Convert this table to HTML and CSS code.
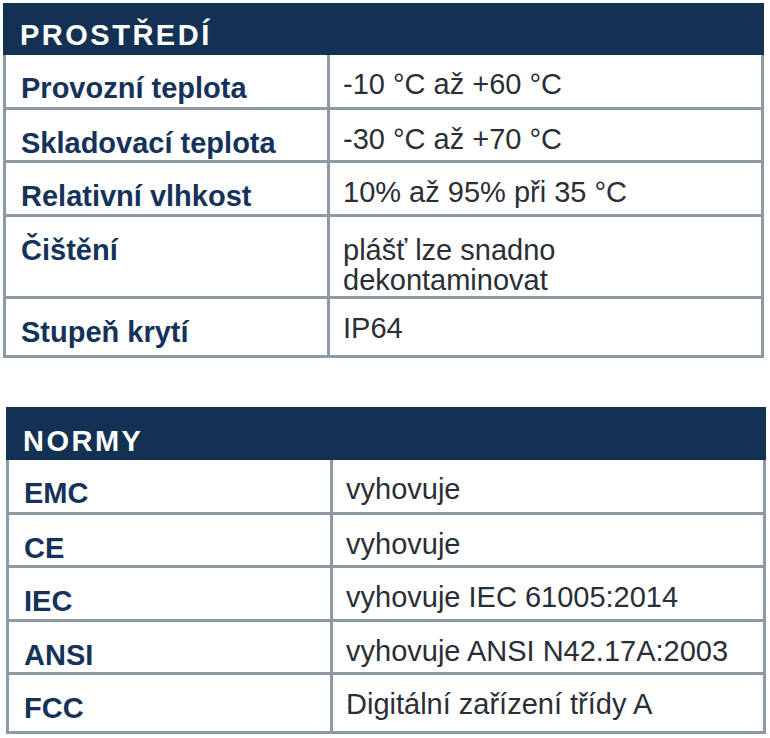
FILE: index.html
```html
<!DOCTYPE html>
<html lang="cs">
<head>
<meta charset="utf-8">
<title>Specifikace</title>
<link rel="stylesheet" href="styles.css">
</head>
<body>
<section class="spec spec--env">
  <h2 class="spec-title">PROSTŘEDÍ</h2>
  <div class="spec-body">
    <div class="spec-row r52"><div class="spec-label">Provozní teplota</div><div class="spec-value">-10 °C až +60 °C</div></div>
    <div class="spec-row r50"><div class="spec-label">Skladovací teplota</div><div class="spec-value">-30 °C až +70 °C</div></div>
    <div class="spec-row r51"><div class="spec-label">Relativní vlhkost</div><div class="spec-value">10% až 95% při 35 °C</div></div>
    <div class="spec-row r79"><div class="spec-label">Čištění</div><div class="spec-value spec-value--low">plášť lze snadno<br>dekontaminovat</div></div>
    <div class="spec-row r56"><div class="spec-label">Stupeň krytí</div><div class="spec-value">IP64</div></div>
  </div>
</section>

<section class="spec spec--norms">
  <h2 class="spec-title spec-title--tall">NORMY</h2>
  <div class="spec-body">
    <div class="spec-row r52"><div class="spec-label">EMC</div><div class="spec-value">vyhovuje</div></div>
    <div class="spec-row r50"><div class="spec-label">CE</div><div class="spec-value">vyhovuje</div></div>
    <div class="spec-row r51"><div class="spec-label">IEC</div><div class="spec-value">vyhovuje IEC 61005:2014</div></div>
    <div class="spec-row r50"><div class="spec-label">ANSI</div><div class="spec-value">vyhovuje ANSI N42.17A:2003</div></div>
    <div class="spec-row r56"><div class="spec-label">FCC</div><div class="spec-value">Digitální zařízení třídy A</div></div>
  </div>
</section>
</body>
</html>
```

FILE: styles.css
```css
* { box-sizing: border-box; }

html, body {
  margin: 0;
  padding: 0;
  background: #ffffff;
}

body {
  font-family: "Liberation Sans", Arial, sans-serif;
  font-size: 29px;
  line-height: 30px;
}

.spec {
  width: 761px;
}

.spec--env {
  margin: 3px 0 0 3px;
}

.spec--norms {
  margin: 49px 0 0 6px;
  width: 760px;
}

.spec-title {
  margin: 0;
  height: 52px;
  padding: 17px 0 0 17px;
  background: #133253;
  color: #ffffff;
  font-size: 29px;
  font-weight: bold;
  line-height: 30px;
  letter-spacing: 2.5px;
}

.spec-title--tall {
  height: 53px;
  padding-top: 19px;
}

.spec-body {
  border: 3px solid #8d9aa6;
  border-top: 0;
}

.spec-row {
  display: grid;
  grid-template-columns: 324px 1fr;
  box-sizing: content-box;
}

.spec-row + .spec-row {
  border-top: 3px solid #8d9aa6;
}

.r50 { height: 50px; }
.r51 { height: 51px; }
.r52 { height: 52px; }
.r56 { height: 56px; }
.r79 { height: 79px; }

.spec-label {
  padding: 18px 0 0 15px;
  border-right: 3px solid #8d9aa6;
  color: #15335a;
  font-weight: bold;
  white-space: nowrap;
}

.spec-value {
  padding: 14px 0 0 13px;
  color: #2a2e36;
  white-space: nowrap;
}

.spec-value--low {
  padding-top: 18px;
}
```
